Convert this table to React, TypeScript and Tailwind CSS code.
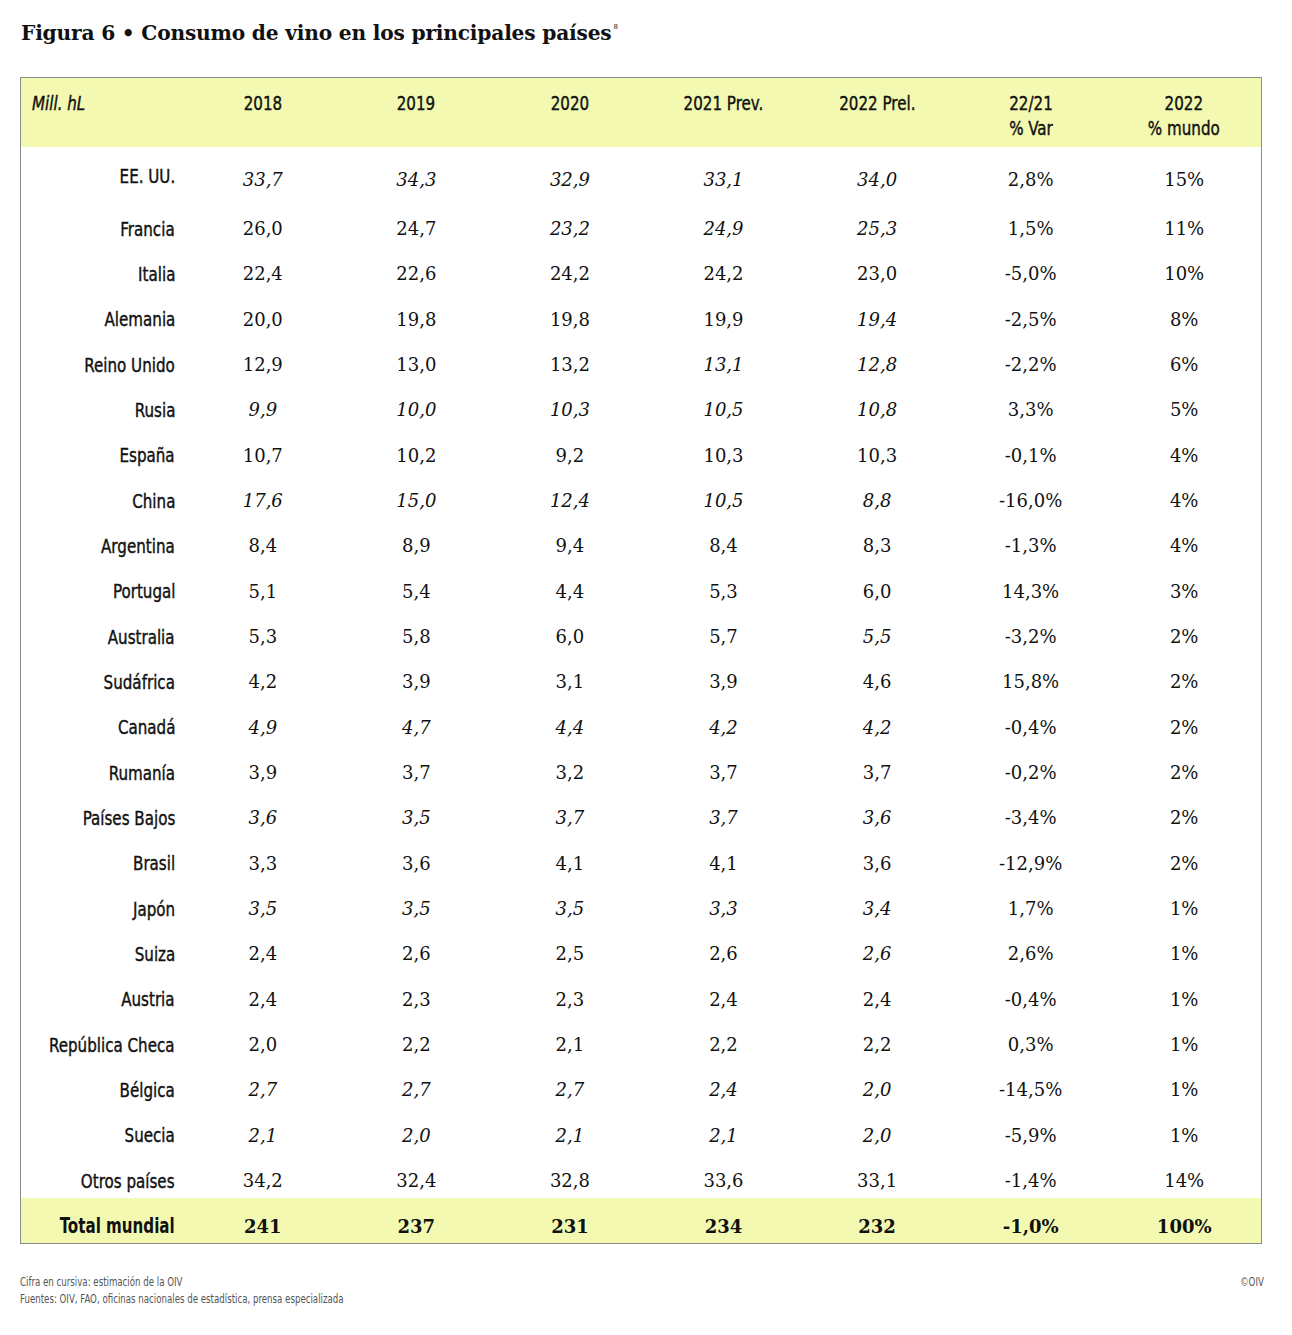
import React from 'react';

type Row = {
  name: string;
  vals: string[];
  // which of the five year values are estimates (italic)
  est: boolean[];
  varPct: string;
  share: string;
};

const A = [true, true, true, true, true];
const N = [false, false, false, false, false];

const rows: Row[] = [
  { name: 'EE. UU.', vals: ['33,7', '34,3', '32,9', '33,1', '34,0'], est: A, varPct: '2,8%', share: '15%' },
  { name: 'Francia', vals: ['26,0', '24,7', '23,2', '24,9', '25,3'], est: [false, false, true, true, true], varPct: '1,5%', share: '11%' },
  { name: 'Italia', vals: ['22,4', '22,6', '24,2', '24,2', '23,0'], est: N, varPct: '-5,0%', share: '10%' },
  { name: 'Alemania', vals: ['20,0', '19,8', '19,8', '19,9', '19,4'], est: [false, false, false, false, true], varPct: '-2,5%', share: '8%' },
  { name: 'Reino Unido', vals: ['12,9', '13,0', '13,2', '13,1', '12,8'], est: [false, false, false, true, true], varPct: '-2,2%', share: '6%' },
  { name: 'Rusia', vals: ['9,9', '10,0', '10,3', '10,5', '10,8'], est: A, varPct: '3,3%', share: '5%' },
  { name: 'España', vals: ['10,7', '10,2', '9,2', '10,3', '10,3'], est: N, varPct: '-0,1%', share: '4%' },
  { name: 'China', vals: ['17,6', '15,0', '12,4', '10,5', '8,8'], est: A, varPct: '-16,0%', share: '4%' },
  { name: 'Argentina', vals: ['8,4', '8,9', '9,4', '8,4', '8,3'], est: N, varPct: '-1,3%', share: '4%' },
  { name: 'Portugal', vals: ['5,1', '5,4', '4,4', '5,3', '6,0'], est: N, varPct: '14,3%', share: '3%' },
  { name: 'Australia', vals: ['5,3', '5,8', '6,0', '5,7', '5,5'], est: [false, false, false, false, true], varPct: '-3,2%', share: '2%' },
  { name: 'Sudáfrica', vals: ['4,2', '3,9', '3,1', '3,9', '4,6'], est: N, varPct: '15,8%', share: '2%' },
  { name: 'Canadá', vals: ['4,9', '4,7', '4,4', '4,2', '4,2'], est: A, varPct: '-0,4%', share: '2%' },
  { name: 'Rumanía', vals: ['3,9', '3,7', '3,2', '3,7', '3,7'], est: N, varPct: '-0,2%', share: '2%' },
  { name: 'Países Bajos', vals: ['3,6', '3,5', '3,7', '3,7', '3,6'], est: A, varPct: '-3,4%', share: '2%' },
  { name: 'Brasil', vals: ['3,3', '3,6', '4,1', '4,1', '3,6'], est: N, varPct: '-12,9%', share: '2%' },
  { name: 'Japón', vals: ['3,5', '3,5', '3,5', '3,3', '3,4'], est: A, varPct: '1,7%', share: '1%' },
  { name: 'Suiza', vals: ['2,4', '2,6', '2,5', '2,6', '2,6'], est: [false, false, false, false, true], varPct: '2,6%', share: '1%' },
  { name: 'Austria', vals: ['2,4', '2,3', '2,3', '2,4', '2,4'], est: N, varPct: '-0,4%', share: '1%' },
  { name: 'República Checa', vals: ['2,0', '2,2', '2,1', '2,2', '2,2'], est: N, varPct: '0,3%', share: '1%' },
  { name: 'Bélgica', vals: ['2,7', '2,7', '2,7', '2,4', '2,0'], est: A, varPct: '-14,5%', share: '1%' },
  { name: 'Suecia', vals: ['2,1', '2,0', '2,1', '2,1', '2,0'], est: A, varPct: '-5,9%', share: '1%' },
  { name: 'Otros países', vals: ['34,2', '32,4', '32,8', '33,6', '33,1'], est: N, varPct: '-1,4%', share: '14%' },
];

const narrow = "font-['Liberation_Sans_Narrow','DejaVu_Sans_Condensed','Liberation_Sans',sans-serif] font-stretch-condensed";
const serif = "font-['DejaVu_Serif','Liberation_Serif',serif]";
const grid = 'grid grid-cols-[165px_repeat(7,1fr)]';

// condensed sans squeezed a bit more so it reads like the report's display face
const Sq: React.FC<{ children: React.ReactNode; className?: string }> = ({ children, className = '' }) => (
  <span className={`inline-block whitespace-nowrap ${className}`}>{children}</span>
);

export default function App() {
  return (
    <div className="w-[1292px] h-[1335px] bg-white text-[#111] pt-[18px]">
      <h1 className={`${serif} font-bold text-[20.2px] leading-[30px] pl-[21px] tracking-[-0.2px]`}>
        Figura 6 • Consumo de vino en los principales países
        <sup className="text-[7px] font-normal top-[-11px] ml-[2px]">8</sup>
      </h1>

      <div className="ml-[20px] mt-[29px] w-[1242px] border border-[#8c8c8c]">
        {/* header */}
        <div className={`${grid} ${narrow} h-[69px] bg-[#f3f9b1] text-[20px] leading-[25px] pt-[13px] [-webkit-text-stroke:0.4px_#111]`}>
          <div className="pl-[11px]"><Sq className="italic scale-x-[0.84] origin-left">Mill. hL</Sq></div>
          <div className="text-center"><Sq className="scale-x-[0.84]">2018</Sq></div>
          <div className="text-center"><Sq className="scale-x-[0.84]">2019</Sq></div>
          <div className="text-center"><Sq className="scale-x-[0.84]">2020</Sq></div>
          <div className="text-center"><Sq className="scale-x-[0.84]">2021 Prev.</Sq></div>
          <div className="text-center"><Sq className="scale-x-[0.84]">2022 Prel.</Sq></div>
          <div className="text-center"><Sq className="scale-x-[0.84]">22/21<br />% Var</Sq></div>
          <div className="text-center"><Sq className="scale-x-[0.84]">2022<br />% mundo</Sq></div>
        </div>

        {/* body */}
        {rows.map((r, i) => (
          <div
            key={r.name}
            className={`${grid} items-center pt-[10px] ${i === 0 ? 'h-[54px]' : 'h-[45.33px]'}`}
          >
            <div className={`${narrow} text-[20px] text-right pr-[11px] [-webkit-text-stroke:0.4px_#111] ${i === 0 ? '-mt-[6px]' : ''}`}>
              <Sq className="scale-x-[0.84] origin-right">{r.name}</Sq>
            </div>
            {r.vals.map((v, j) => (
              <div key={j} className={`${serif} text-[18px] text-center ${r.est[j] ? 'italic' : ''}`}>
                {v}
              </div>
            ))}
            <div className={`${serif} text-[18px] text-center`}>{r.varPct}</div>
            <div className={`${serif} text-[18px] text-center`}>{r.share}</div>
          </div>
        ))}

        {/* total */}
        <div className={`${grid} items-center pt-[12px] h-[45px] bg-[#f3f9b1]`}>
          <div className={`${narrow} font-bold text-[21px] text-right pr-[11px]`}>
            <Sq className="scale-x-[0.8] origin-right">Total mundial</Sq>
          </div>
          {['241', '237', '231', '234', '232', '-1,0%', '100%'].map((v) => (
            <div key={v} className={`${serif} font-bold text-[18px] text-center`}>{v}</div>
          ))}
        </div>
      </div>

      <div className={`${narrow} flex justify-between pl-[20px] pr-[28px] mt-[30px] text-[12px] leading-[17px] text-[#555]`}>
        <div>
          <div><Sq className="scale-x-[0.8] origin-left">Cifra en cursiva: estimación de la OIV</Sq></div>
          <div><Sq className="scale-x-[0.8] origin-left">Fuentes: OIV, FAO, oficinas nacionales de estadística, prensa especializada</Sq></div>
        </div>
        <div><Sq className="scale-x-[0.8] origin-right">©OIV</Sq></div>
      </div>
    </div>
  );
}
